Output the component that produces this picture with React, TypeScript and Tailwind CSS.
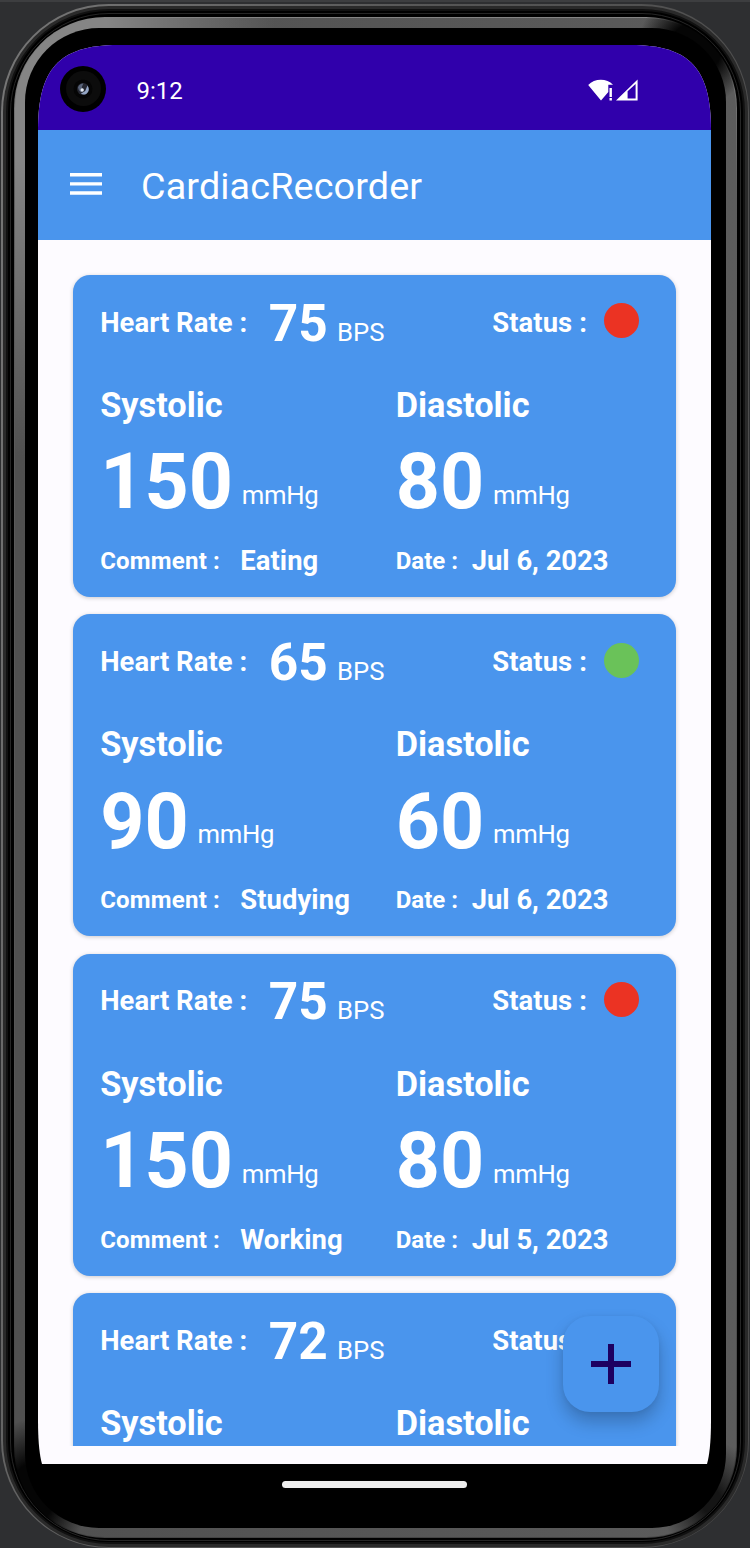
type Reading = {
  rate: number;
  ok: boolean;
  details?: {
    systolic: number;
    diastolic: number;
    comment: string;
    date: string;
  };
};

const readings: Reading[] = [
  { rate: 75, ok: false, details: { systolic: 150, diastolic: 80, comment: "Eating", date: "Jul 6, 2023" } },
  { rate: 65, ok: true, details: { systolic: 90, diastolic: 60, comment: "Studying", date: "Jul 6, 2023" } },
  { rate: 75, ok: false, details: { systolic: 150, diastolic: 80, comment: "Working", date: "Jul 5, 2023" } },
  { rate: 72, ok: true },
];

function Pressure({ value }: { value: number }) {
  return (
    <div className="flex h-20 items-center">
      <span className="text-[77.1px] leading-none font-bold">{value}</span>
      <span className="ml-[8.8px] pt-[28px] text-[25.7px] leading-none tracking-[-0.25px]">mmHg</span>
    </div>
  );
}

function ReadingCard({ r }: { r: Reading }) {
  return (
    <article className="h-[322px] shrink-0 rounded-[17px] bg-[#4a95ed] pl-[27.2px] whitespace-nowrap text-white shadow-[0_1px_4px_rgba(0,0,0,0.2)]">
      <div className="flex h-24 items-center pr-[37px]">
        <span className="w-[168.5px] shrink-0 pt-px text-[27.4px] leading-none font-bold tracking-[0.06px]">Heart Rate :</span>
        <span className="pt-px text-[51.4px] leading-none font-bold">{r.rate}</span>
        <span className="ml-[9.4px] pt-[19px] text-[25.7px] leading-none">BPS</span>
        <span className="ml-auto pt-px text-[27.4px] leading-none font-bold tracking-[0.1px]">Status :</span>
        <span className={`mb-[4px] ml-[17px] size-[35px] rounded-full ${r.ok ? "bg-[#6ac259]" : "bg-[#eb3323]"}`} />
      </div>
      <div className="grid grid-cols-[295.5px_1fr] pt-[14px]">
        <h2 className="h-10 text-[34.3px] leading-10 font-bold">Systolic</h2>
        <h2 className="h-10 text-[34.3px] leading-10 font-bold">Diastolic</h2>
      </div>
      {r.details && (
        <>
          <div className="grid grid-cols-[295.5px_1fr] pt-[17px]">
            <Pressure value={r.details.systolic} />
            <Pressure value={r.details.diastolic} />
          </div>
          <div className="grid grid-cols-[295.5px_1fr] pt-[21px] leading-9 font-bold">
            <div className="flex h-9">
              <span className="w-[140px] text-[24px] tracking-[0.2px]">Comment :</span>
              <span className="text-[27.4px] tracking-[0.1px]">{r.details.comment}</span>
            </div>
            <div className="flex h-9">
              <span className="w-[76px] text-[24px]">Date :</span>
              <span className="text-[27.4px]">{r.details.date}</span>
            </div>
          </div>
        </>
      )}
    </article>
  );
}

function StatusBar() {
  return (
    <div className="flex h-[85px] shrink-0 items-center bg-[#3000ab] pl-[22px] text-white">
      <div className="mt-[2px] flex size-[46px] items-center justify-center rounded-full bg-black">
        <div className="flex size-[35px] items-center justify-center rounded-full bg-[#0c0c0c]">
          <svg viewBox="0 0 20 20" className="size-5">
            <circle cx="10" cy="10" r="9.5" fill="#050505" />
            <circle cx="10" cy="10" r="6" fill="#242630" />
            <path d="M5 8.2Q6.8 4.4 10.4 4.6L8.8 8 10 11.5 8 13.6Q5.2 11.5 5 8.2z" fill="#5a647a" />
            <path d="M14.5 6.6Q17.4 11.5 13.8 14.4 10.8 16.6 7.8 14.8L12.2 12z" fill="#93a5c4" />
            <circle cx="9.2" cy="11" r="1.7" fill="#e6edf5" />
          </svg>
        </div>
      </div>
      <span className="ml-[30.5px] pt-[6px] text-[24px] leading-none">9:12</span>
      <svg viewBox="0 0 50 22" className="mt-[4px] mr-[73px] ml-auto h-[22px] w-[50px]" fill="#fff">
        <path d="M0.2 6C6.5-1 19-1 25 5.8H20.3V13L13 21.5z" />
        <path d="M21.5 9h2.4v9h-2.4zM21.5 19h2.4v2.6h-2.4z" />
        <path fillRule="evenodd" d="M28 21.6L49.6.4V21.6zM39.6 12.2V19.6H47.6V5z" />
      </svg>
    </div>
  );
}

function AppBar() {
  return (
    <header className="flex h-[109.5px] shrink-0 items-center bg-[#4a95ed] pl-8 text-white">
      <svg viewBox="0 0 32 22" className="mb-px h-[22px] w-8" fill="#fff">
        <path d="M0 0h32v3.5H0zM0 9.2h32v3.4H0zM0 18.3h32v3.5H0z" />
      </svg>
      <h1 className="ml-[39px] pt-[5px] text-[37.7px] leading-none tracking-[0.15px]">CardiacRecorder</h1>
    </header>
  );
}

export default function App() {
  return (
    <div className="h-[1548px] w-[750px] overflow-hidden border-t-2 border-[#3d3e40] bg-[#2e2f31] pt-[2px] pl-px font-[Roboto,sans-serif]">
      <div className="h-[1544px] w-[748px] rounded-[108px] bg-[linear-gradient(100deg,#777_0%,#555_45%,#4b4b4b_100%)] p-[1.5px]">
        <div className="size-full rounded-[106px] bg-[#2a2a2a] p-[3px]">
          <div className="size-full rounded-[103px] border-2 border-[#111] bg-black p-[2px] pb-px">
            <div className="size-full rounded-[99px] border border-[#262626] bg-black px-[3px] pt-[3px] pb-[2px]">
              <div className="size-full rounded-[91px] bg-[radial-gradient(58px_58px_at_681px_32px,#050505_45%,transparent),radial-gradient(55px_75px_at_18px_1477px,#050505_40%,transparent),radial-gradient(50px_60px_at_697px_1484px,#151515_20%,transparent),linear-gradient(180deg,#858585_0%,#5c5c5c_12%,#555_75%,#444_100%)] p-px">
                <div className="size-full rounded-[90px] bg-[radial-gradient(58px_58px_at_680px_31px,#050505_45%,transparent),radial-gradient(55px_75px_at_17px_1476px,#050505_40%,transparent),radial-gradient(50px_60px_at_696px_1483px,#151515_20%,transparent),radial-gradient(240px_420px_at_20px_20px,#858585_30%,transparent),linear-gradient(90deg,#505050,#5c5c5c)] px-[10px] pt-[10px] pb-[9px]">
                  <div className="flex size-full flex-col items-start rounded-[74px] bg-black pt-[17.5px] pl-[13.5px]">
                    <main className="relative flex h-[1419px] w-[673px] shrink-0 flex-col bg-[#fdfbff] [clip-path:path('M0_85C0_25_20_0_80_0H593C653_0_673_25_673_85V1375Q673_1405_669_1419H4Q0_1405_0_1375Z')]">
                      <StatusBar />
                      <AppBar />
                      <section className="flex h-[1206.5px] shrink-0 flex-col gap-[17.4px] overflow-hidden px-[35px] pt-[35.4px]">
                        {readings.map((r, i) => (
                          <ReadingCard key={i} r={r} />
                        ))}
                      </section>
                      <button
                        aria-label="Add reading"
                        className="absolute right-[52px] bottom-[52px] flex size-24 items-center justify-center rounded-[27px] bg-[#4a95ed] shadow-[0_10px_17px_rgba(0,0,0,0.22),0_1px_5px_rgba(0,0,0,0.06)]"
                      >
                        <svg viewBox="0 0 40 40" className="size-10">
                          <path d="M17 0h6v17h17v6H23v17h-6V23H0v-6h17z" fill="#1d0061" />
                        </svg>
                      </button>
                    </main>
                    <div className="mt-[17px] ml-[244px] h-[7px] w-[185px] rounded-full bg-[#eee]" />
                  </div>
                </div>
              </div>
            </div>
          </div>
        </div>
      </div>
    </div>
  );
}
